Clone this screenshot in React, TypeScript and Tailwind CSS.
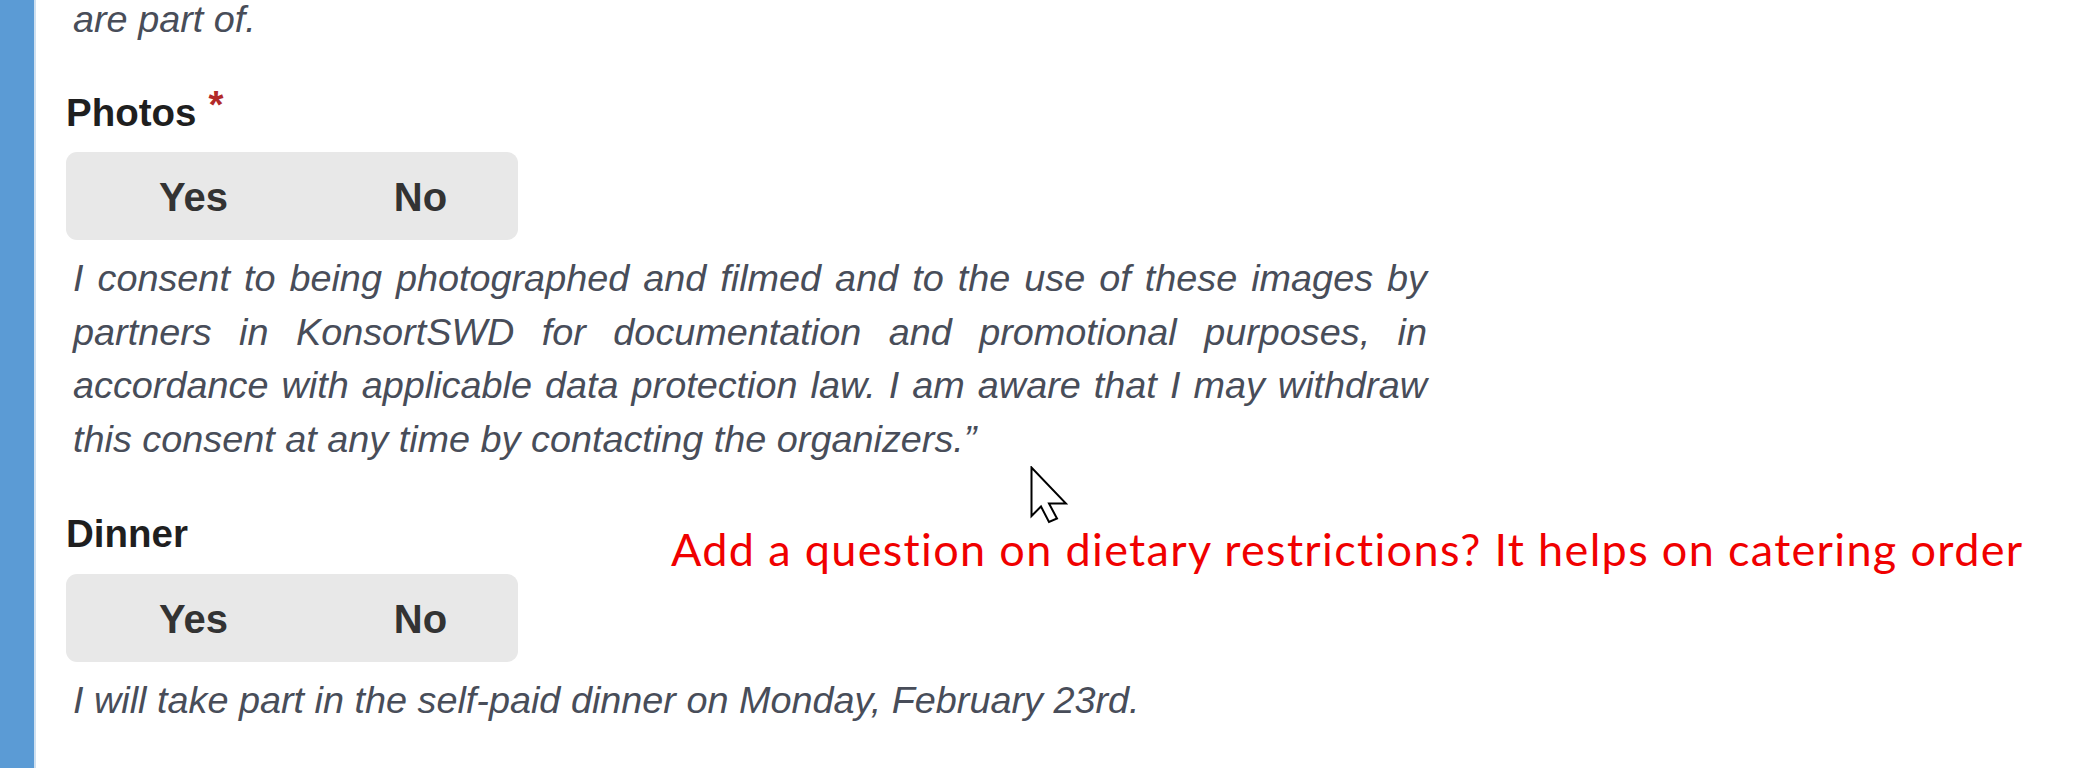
import React from 'react';

const SANS = "font-['Liberation_Sans',Arial,sans-serif]";

const Toggle: React.FC = () => (
  <div className="mt-[13px] flex h-[88px] w-[452px] items-center overflow-hidden rounded-[11px] bg-[#e8e8e8] pl-[14px] pt-[4px]">
    <span className="w-[227px] shrink-0 text-center text-[40px] font-bold text-[#333333]">Yes</span>
    <span className="w-[227px] shrink-0 text-center text-[40px] font-bold text-[#333333]">No</span>
  </div>
);

const Cursor: React.FC = () => (
  <svg className="absolute left-[1030px] top-[466px]" width="38" height="58" viewBox="0 0 38 58">
    <path
      d="M1.5 1.5 L1.5 50 L11 40.5 L19 56 L27 52.5 L19 37.5 L36 37.5 Z"
      fill="#ffffff"
      stroke="#000000"
      strokeWidth="2"
      strokeLinejoin="miter"
    />
  </svg>
);

export default function App() {
  return (
    <div className={`relative flex min-h-[768px] overflow-hidden bg-white ${SANS}`}>
      <div className="w-[36px] shrink-0 border-r-2 border-[#cfe0f0] bg-[#5b9bd5]" />

      <div className="-mt-[7px] w-[1391px] shrink-0 pl-[30px] text-[37.8px] leading-[53.57px]">
        <p className="pl-[7px] italic text-[#484d59]">are part of.</p>

        <div className="mt-[39px]">
          <label className="block text-[38.5px] font-bold text-[#1f1f1f]">
            Photos
            <span className="relative -top-[8px] ml-[12px] text-[#b22a2a]">*</span>
          </label>
          <Toggle />
          <p className="mt-[12px] pl-[7px] text-justify italic text-[#484d59]">
            I consent to being photographed and filmed and to the use of these images by partners in KonsortSWD for
            documentation and promotional purposes, in accordance with applicable data protection law. I am aware that I
            may withdraw this consent at any time by contacting the organizers.”
          </p>
        </div>

        <div className="mt-[41px]">
          <label className="block text-[38.5px] font-bold text-[#1f1f1f]">Dinner</label>
          <Toggle />
          <p className="mt-[12px] pl-[7px] italic text-[#484d59]">
            I will take part in the self-paid dinner on Monday, February 23rd.
          </p>
        </div>
      </div>

      <p className="absolute left-[671px] top-[527px] whitespace-nowrap font-['Lato',sans-serif] text-[45px] leading-none tracking-[1.33px] text-[#f00000]">
        Add a question on dietary restrictions? It helps on catering order
      </p>

      <Cursor />
    </div>
  );
}
